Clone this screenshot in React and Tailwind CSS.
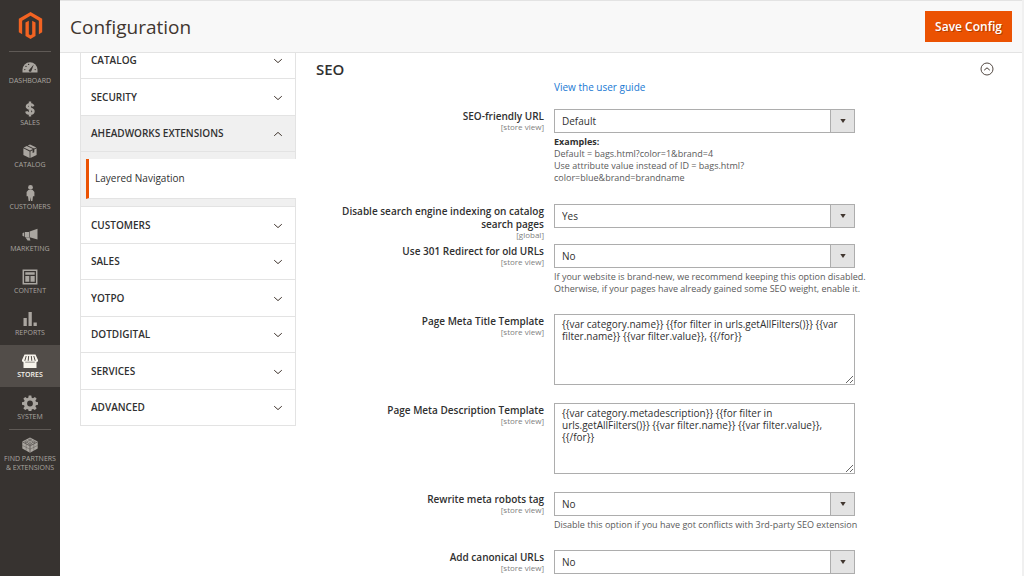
import { useState } from "react";

const icons = {
  dashboard: (
    <>
      <path d="M0.5 13.5v-2.8a7.5 7.5 0 0 1 15 0v2.8z" fill="currentColor" />
      <path d="M6.6 11.6 11.8 5.6 9.2 12.4a1.6 1.6 0 0 1-2.6-.8z" fill="#373330" />
      <g fill="#373330">
        <circle cx="2.8" cy="10.6" r="0.7" />
        <circle cx="4" cy="7.4" r="0.7" />
        <circle cx="6.6" cy="5.4" r="0.7" />
        <circle cx="13.2" cy="10.6" r="0.7" />
      </g>
    </>
  ),
  sales: (
    <path
      d="M11.3 5.4C10.9 4 9.700 3.300 8 3.300 6.100 3.300 4.900 4.100 4.900 5.500c0 3.200 6.600 1.300 6.600 4.800 0 1.500-1.400 2.500-3.500 2.500-2 0-3.300-.8-3.700-2.400M8 .5v15"
      fill="none"
      stroke="currentColor"
      strokeWidth="2.4"
    />
  ),
  catalog: (
    <g fill="currentColor">
      <path d="M1.600 4.600 4.800 3 11 6.100 8 7.600z" />
      <path d="M5.800 2.500 8 1.400 14.400 4.600 12 5.600z" />
      <path d="M1.400 5.300 7.600 8.400v6.700L1.400 12z" />
      <path d="M8.400 8.400 10.600 7.300v2.700l1.700-.8V6.500l2.300-1.200V12L8.400 15.100z" />
    </g>
  ),
  customers: (
    <g fill="currentColor">
      <circle cx="8.500" cy="2.400" r="2.400" />
      <path d="M6.300 5h4.400l1.700 2v4.200h-1.400L10.400 16H9L8.500 12 8 16H6.600L6 11.200H4.600V7z" />
    </g>
  ),
  marketing: (
    <g fill="currentColor">
      <path d="M15.500 1.800v10.700L7.600 10.300V4.600z" />
      <path d="M3 5h4v5H3z" />
      <path d="M.5 6.200 2.300 5.300v4.400L.5 8.800z" />
      <path d="M3.300 10.300h4.200l.9 3.200H5.600z" />
    </g>
  ),
  content: (
    <>
      <path d="M1.300 1.300h13.400v13.400H1.300z" fill="none" stroke="currentColor" strokeWidth="1.500" />
      <path d="M3.300 3.300h9.400v2.500H3.300zM3.300 7h4v5.700h-4zM8.500 7h4.200v5.700H8.500z" fill="currentColor" />
    </>
  ),
  reports: <path d="M1.500 7h3.300v8H1.500zM6.500 1h3.300v14H6.500zM11.500 11.500h3.300V15h-3.300z" fill="currentColor" />,
  stores: (
    <>
      <path d="M2.500 1.500h11L16 7a2.600 2 0 0 1-1.500 2.200V15h-13V9.200A2.600 2 0 0 1 0 7z" fill="currentColor" />
      <path
        d="M4.200 3 2.800 7.800M6.700 3 6.200 7.800M9.300 3l.5 4.800M11.800 3l1.400 4.800"
        stroke="#524d49"
        strokeWidth="1"
      />
      <path d="M3.200 8.800h9.600v.6H3.200z" fill="#524d49" />
    </>
  ),
  system: (
    <path
      fill="currentColor"
      fillRule="evenodd"
      d="M6.700.5h2.600l.4 2.200 1.300.5 1.900-1.300 1.800 1.800L13.400 5.600l.5 1.200 2.200.4v2.600l-2.200.4-.5 1.300 1.300 1.800-1.800 1.800-1.900-1.200-1.300.5-.4 2.100H6.700l-.4-2.100-1.300-.5-1.800 1.200-1.900-1.800 1.300-1.800-.5-1.300L0 9.800V7.200l2.100-.4.5-1.200L1.300 3.700l1.900-1.800L5 3.200l1.300-.5zM8 5.600a2.900 2.900 0 1 0 0 5.800 2.900 2.900 0 0 0 0-5.800z"
    />
  ),
  partners: (
    <>
      <path d="M.3 4.600v7L8 15.800l7.700-4.200v-7L8 .6z" fill="currentColor" />
      <path
        d="M.5 4.900 8 8.900l7.500-4M8 9v6.600"
        fill="none"
        stroke="#373330"
        strokeWidth="0.600"
      />
      <path
        d="M4.200 7.100v6.500M11.800 7.100v6.500M.5 8.500 8 12.200l7.500-3.700"
        fill="none"
        stroke="#373330"
        strokeWidth="0.300"
      />
      <g fill="none" stroke="#373330" strokeWidth="0.500">
        <ellipse cx="8" cy="3" rx="1.600" ry="0.800" />
        <ellipse cx="4.500" cy="4.800" rx="1.600" ry="0.800" />
        <ellipse cx="11.500" cy="4.800" rx="1.600" ry="0.800" />
        <ellipse cx="8" cy="6.600" rx="1.600" ry="0.800" />
      </g>
    </>
  ),
};

const menu = [
  { icon: "dashboard", label: "Dashboard" },
  { icon: "sales", label: "Sales" },
  { icon: "catalog", label: "Catalog" },
  { icon: "customers", label: "Customers" },
  { icon: "marketing", label: "Marketing" },
  { icon: "content", label: "Content" },
  { icon: "reports", label: "Reports" },
  { icon: "stores", label: "Stores", active: true },
  { icon: "system", label: "System" },
];

const sections = [
  { title: "Catalog" },
  { title: "Security" },
  { title: "Aheadworks Extensions", items: ["Layered Navigation"] },
  { title: "Customers" },
  { title: "Sales" },
  { title: "Yotpo" },
  { title: "Dotdigital" },
  { title: "Services" },
  { title: "Advanced" },
];

const MenuItem = ({ icon, label, active }) => (
  <a
    href="#"
    className={`flex flex-col items-center gap-px pt-2 min-h-[42px] text-[7px] leading-[9px] text-center uppercase ${
      active ? "bg-[#524d49] text-[#f7f3eb] font-semibold" : "text-[#aaa6a0]"
    }`}
  >
    <svg viewBox="0 0 16 16" className="size-4">
      {icons[icon]}
    </svg>
    <span>{label}</span>
  </a>
);

const Sidebar = () => (
  <aside className="w-[60px] shrink-0 bg-[#373330]">
    <a href="#" aria-label="Magento Admin" className="flex justify-center pt-3 h-[51px]">
      <svg viewBox="0 0 24 24" className="size-[27px]" fill="#f26322">
        <path d="M12 24l-4.455-2.572v-12l2.97-1.715v12.001l1.485.902 1.485-.902V7.713l2.971 1.715v12L12 24zM22.391 6v12l-2.969 1.714V7.713L12 3.430 4.574 7.713v12.001L1.609 18V6L12 0l10.391 6z" />
      </svg>
    </a>
    <nav>
      <hr className="mx-[9px] -mb-px border-[#5f5a56]" />
      {menu.map((item) => (
        <MenuItem key={item.label} {...item} />
      ))}
      <hr className="mx-[9px] -mb-px border-[#5f5a56]" />
      <MenuItem
        icon="partners"
        label={
          <>
            Find Partners
            <br />& Extensions
          </>
        }
      />
    </nav>
  </aside>
);

const ConfigNav = () => {
  const [open, setOpen] = useState("Aheadworks Extensions");

  return (
    <nav className="w-54 shrink-0 -mt-2.5">
      <ul className="border-x border-[#e3e3e3]">
        {sections.map(({ title, items }) => {
          const isOpen = open === title;
          return (
            <li key={title} className="even:pt-px">
              <button
                type="button"
                aria-expanded={isOpen}
                onClick={() => setOpen(isOpen ? "" : title)}
                className={`flex items-center justify-between w-full h-9 pl-2.5 pr-3 border-b border-[#e3e3e3] text-[10px] font-semibold uppercase text-[#303030] ${
                  isOpen ? "bg-[#f0f0f0]" : ""
                }`}
              >
                {title}
                <svg viewBox="0 0 10 6" className="w-2.5 h-1.5" fill="none" stroke="#41362f">
                  <path d={isOpen ? "M1.200 4.800 5 1.400 8.800 4.800" : "M1.200 1.200 5 4.600 8.800 1.200"} />
                </svg>
              </button>
              {isOpen && items && (
                <div className="pl-[5px] py-[7px] bg-[#f0f0f0] border-b border-[#e3e3e3]">
                  {items.map((item) => (
                    <a
                      key={item}
                      href="#"
                      className="flex items-center h-10 -mr-px pl-1.5 bg-white border-l-3 border-l-[#eb5202] border-b border-b-[#e3e3e3] text-[10px] text-[#303030]"
                    >
                      {item}
                    </a>
                  ))}
                </div>
              )}
            </li>
          );
        })}
      </ul>
    </nav>
  );
};

const Field = ({ id, label, scope = "store view", note, children }) => (
  <div className="grid grid-cols-[228px_minmax(0,301px)] gap-x-2.5">
    <label htmlFor={id} className="pt-px text-right text-[10px] leading-[13px] font-semibold text-[#303030]">
      {label}
      <span className="block text-[8px] leading-[8px] font-normal text-[#808080]">[{scope}]</span>
    </label>
    <div className="pb-4">
      {children}
      {note && <div className="mt-[3px] mb-[3px] -mr-5 text-[9px] leading-3 text-[#5a5a5a]">{note}</div>}
    </div>
  </div>
);

const SelectField = ({ id, value, options, ...rest }) => (
  <Field id={id} {...rest}>
    <div className="relative">
      <select
        id={id}
        defaultValue={value}
        className="block w-full h-6 pl-[7px] appearance-none bg-white border border-[#adadad] text-[10px] text-[#303030]"
      >
        {options.map((option) => (
          <option key={option}>{option}</option>
        ))}
      </select>
      <span className="absolute inset-y-0 right-0 w-[25px] flex items-center justify-center bg-[#e3e3e3] border border-[#adadad] pointer-events-none">
        <svg viewBox="0 0 6 4" className="w-1.5 h-1" fill="#41362f">
          <path d="M0.300 0h5.400L3 4z" />
        </svg>
      </span>
    </div>
  </Field>
);

const TextareaField = ({ id, value, ...rest }) => (
  <Field id={id} {...rest}>
    <textarea
      id={id}
      defaultValue={value}
      spellCheck={false}
      className="block w-full h-[71px] mb-[2px] px-[7px] py-[3px] bg-white border border-[#adadad] text-[10px] leading-3 text-[#303030]"
    />
  </Field>
);

const yesNo = ["Yes", "No"];

const App = () => {
  return (
    <div className="flex min-h-screen bg-white font-['Open_Sans',sans-serif] text-[#303030]">
      <Sidebar />
      <div className="flex-1 min-w-0 border-r-2 border-[#f0f0f0]">
        <header className="relative z-10 flex items-center justify-between h-[53px] px-2.5 bg-[#f8f8f8] border-y border-[#e3e3e3]">
          <h1 className="text-[19px] leading-6 text-[#41362f]">Configuration</h1>
          <button
            type="button"
            className="h-[31px] px-2.5 bg-[#eb5202] text-[12px] font-semibold text-white text-shadow-[1px_1px_0_rgba(0,0,0,0.25)]"
          >
            Save Config
          </button>
        </header>
        <div className="flex gap-5 pl-5 pr-7">
          <ConfigNav />
          <main className="flex-1 min-w-0 pt-1.5">
            <div className="flex items-center justify-between">
              <h2 className="text-[15px] leading-5 font-semibold text-[#303030]">SEO</h2>
              <button type="button" aria-label="Collapse section">
                <svg viewBox="0 0 14 14" className="size-3.5" fill="none" stroke="#41362f">
                  <circle cx="7" cy="7" r="6" strokeWidth="0.900" />
                  <path d="M4.200 8.200 7 5.800l2.800 2.400" />
                </svg>
              </button>
            </div>
            <div className="pl-[238px] pt-px pb-3.5 text-[10px] leading-[15px]">
              <a href="#" className="text-[#1979d3]">
                View the user guide
              </a>
            </div>
            <SelectField
              id="seo-url"
              label="SEO-friendly URL"
              value="Default"
              options={["Default", "Use attribute value instead of ID"]}
              note={
                <div className="pb-px">
                  <b className="text-[#303030]">Examples:</b>
                  <br />
                  Default = bags.html?color=1&amp;brand=4
                  <br />
                  Use attribute value instead of ID = bags.html?
                  <br />
                  color=blue&amp;brand=brandname
                </div>
              }
            />
            <SelectField
              id="search-indexing"
              label="Disable search engine indexing on catalog search pages"
              scope="global"
              value="Yes"
              options={yesNo}
            />
            <SelectField
              id="redirect"
              label="Use 301 Redirect for old URLs"
              value="No"
              options={yesNo}
              note="If your website is brand-new, we recommend keeping this option disabled. Otherwise, if your pages have already gained some SEO weight, enable it."
            />
            <TextareaField
              id="meta-title"
              label="Page Meta Title Template"
              value="{{var category.name}} {{for filter in urls.getAllFilters()}} {{var filter.name}} {{var filter.value}}, {{/for}}"
            />
            <TextareaField
              id="meta-description"
              label="Page Meta Description Template"
              value="{{var category.metadescription}} {{for filter in urls.getAllFilters()}} {{var filter.name}} {{var filter.value}}, {{/for}}"
            />
            <SelectField
              id="robots"
              label="Rewrite meta robots tag"
              value="No"
              options={yesNo}
              note="Disable this option if you have got conflicts with 3rd-party SEO extension"
            />
            {/* last row runs to the edge of the window */}
            <div className="-mb-4">
              <SelectField id="canonical" label="Add canonical URLs" value="No" options={yesNo} />
            </div>
          </main>
        </div>
      </div>
    </div>
  );
};

export default App;
